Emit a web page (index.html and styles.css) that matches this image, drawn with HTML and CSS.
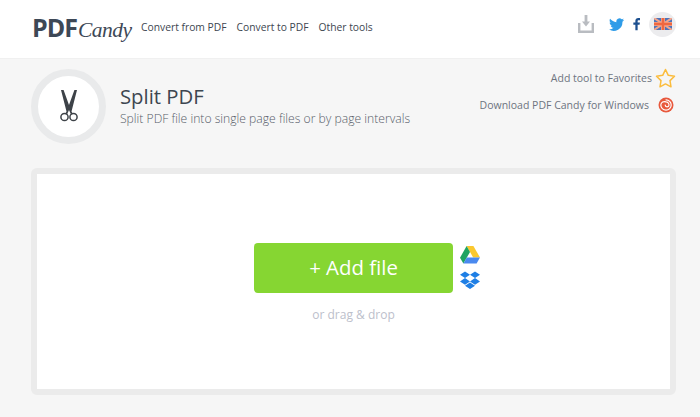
FILE: index.html
```html
<!DOCTYPE html>
<html lang="en">

<head>
    <meta charset="UTF-8">
    <title>Split PDF</title>
    <link rel="stylesheet" href="styles.css">
</head>

<body>
    <header class="header">
        <a class="logo"><b class="logo__pdf">PDF</b><i class="logo__candy">Candy</i></a>
        <nav class="nav">
            <a>Convert from PDF</a>
            <a>Convert to PDF</a>
            <a>Other tools</a>
        </nav>
        <div class="header__icons">
            <svg class="icon-download" width="16" height="18" viewBox="0 0 16 18">
                <path d="M1.200 8v8.800h13.600V8" fill="none" stroke="#b9bcc1" stroke-width="2.400" />
                <path d="M6.600 0h2.800v6.500H12l-4 5-4-5h2.600z" fill="#b9bcc1" />
            </svg>
            <svg class="icon-twitter" width="15" height="13" viewBox="0 0 24 20">
                <path fill="#2f9ce8" d="M24 2.400c-.9.400-1.800.7-2.800.8 1-.6 1.800-1.600 2.200-2.700-1 .6-2 1-3.100 1.200A4.900 4.900 0 0 0 11.900 6.200C7.800 6 4.200 4 1.700.9.400 3.200 1 6.100 3.200 7.500c-.8 0-1.600-.2-2.200-.6 0 2.400 1.700 4.400 3.900 4.900-.7.200-1.500.2-2.200.1.600 2 2.400 3.400 4.600 3.400A9.900 9.900 0 0 1 0 17.900 14 14 0 0 0 21.500 5.500c1-.7 1.800-1.600 2.500-3.100z" />
            </svg>
            <svg class="icon-facebook" width="7" height="14" viewBox="0 0 8 14">
                <path fill="#1c4f8f" d="M5.300 14V7.800h2.200l.4-2.500H5.300V3.800c0-.8.200-1.200 1.300-1.200H8V.2C7.700.1 6.900 0 6 0 4 0 2.700 1.200 2.700 3.400v1.900H.4v2.500h2.300V14z" />
            </svg>
            <span class="lang">
                <svg width="18" height="12" viewBox="0 0 18 12">
                    <rect width="18" height="12" fill="#4f73b8" />
                    <path d="M0 0l18 12M18 0L0 12" stroke="#f3a58c" stroke-width="2" />
                    <path d="M9 0v12M0 6h18" stroke="#f3a58c" stroke-width="4" />
                    <path d="M9 0v12M0 6h18" stroke="#f0673f" stroke-width="2.400" />
                </svg>
            </span>
        </div>
    </header>

    <main class="main">
        <section class="tool">
            <div class="tool__icon">
                <svg class="icon-scissors" width="18" height="32" viewBox="0 0 18 32">
                    <path d="M1 0h2.600l5.400 15 5.400-15H17l-5.500 21.500 1 1.800-1.600.9L9 20l-1.900 4.200-1.600-.9 1-1.800z" fill="#3d4248" />
                    <circle cx="4.500" cy="27" r="3.600" fill="none" stroke="#3d4248" stroke-width="1.500" />
                    <circle cx="13.500" cy="27" r="3.600" fill="none" stroke="#3d4248" stroke-width="1.500" />
                </svg>
            </div>
            <div class="tool__text">
                <h1>Split PDF</h1>
                <p>Split PDF file into single page files or by page intervals</p>
            </div>
            <div class="tool__links">
                <a class="tool__link">Add tool to Favorites
                    <svg class="icon-star" width="21" height="20" viewBox="0 0 21 20">
                        <path d="M10.500 1.500l2.800 5.800 6.200.9-4.500 4.400 1 6.200-5.500-2.900L5 18.800l1-6.200L1.500 8.200l6.200-.9z" fill="none" stroke="#fbbc3c" stroke-width="1.500" stroke-linejoin="round" />
                    </svg>
                </a>
                <a class="tool__link tool__link--win">Download PDF Candy for Windows
                    <svg class="icon-candy" width="16" height="16" viewBox="0 0 16 16">
                        <circle cx="8" cy="8" r="7.500" fill="#e8583c" />
                        <path d="M8 2.800a5.200 5.200 0 1 1-5.200 5.200A3.700 3.700 0 0 1 8 4.900 3 3 0 0 1 11 8 1.900 1.900 0 0 1 7.200 8" fill="none" stroke="#fff" stroke-width="1.200" stroke-linecap="round" />
                    </svg>
                </a>
            </div>
        </section>

        <section class="drop">
            <div class="drop__row">
                <button class="add-btn">+ Add file</button>
                <div class="drop__services">
                    <svg width="20" height="18" viewBox="0 0 20 18">
                        <path d="M6.600 0h6.800l6.600 11.500h-6.800z" fill="#fbc82f" />
                        <path d="M6.600 0L0 11.800l3.400 5.700L10 6z" fill="#1ea362" />
                        <path d="M3.400 17.500h13.200l3.400-6H6.800z" fill="#4a89ef" />
                    </svg>
                    <svg width="20" height="20" viewBox="0 0 20 19">
                        <path fill="#1f7fe5" d="M5 0L0 3.300l5 3.300 5-3.300zM15 0l-5 3.300 5 3.300 5-3.300zM0 9.900l5 3.300 5-3.300-5-3.300zM15 6.600l-5 3.300 5 3.300 5-3.300zM5 14.300L10 17.600l5-3.300-5-3.300z" />
                    </svg>
                </div>
            </div>
            <p class="drop__hint">or drag &amp; drop</p>
        </section>
    </main>
</body>

</html>
```

FILE: styles.css
```css
* {
    box-sizing: border-box;
}

html,
body {
    height: 100%;
}

body {
    margin: 0;
    background-color: #f6f6f6;
    color: #3d4650;
    font-family: "Open Sans", sans-serif;
    overflow: hidden;
}

a {
    color: inherit;
    text-decoration: none;
}

.header {
    display: flex;
    align-items: center;
    height: 59px;
    padding: 0 24px 5px 32px;
    background-color: #ffffff;
    border-bottom: 1px solid #f0f0f0;
}

.logo {
    display: flex;
    align-items: baseline;
    width: 109px;
    color: #3d4856;
}

.logo__pdf {
    font-size: 25px;
    font-weight: 700;
    letter-spacing: -1px;
}

.logo__candy {
    margin-left: 1px;
    font-family: "Liberation Serif", serif;
    font-size: 21.500px;
    letter-spacing: -0.5px;
}

.nav {
    display: flex;
    gap: 10px;
    font-size: 10.300px;
    color: #3d4650;
}

.header__icons {
    display: flex;
    align-items: center;
    margin-left: auto;
    margin-bottom: 5px;
}

.icon-download {
    margin-right: 15px;
}

.icon-twitter {
    margin-right: 9px;
}

.icon-facebook {
    margin-right: 9px;
}

.lang {
    display: flex;
    align-items: center;
    justify-content: center;
    width: 27px;
    height: 25px;
    background-color: #ececee;
    border-radius: 50%;
}

.main {
    padding: 10px 24px 0 31px;
}

.tool {
    display: flex;
    align-items: center;
    height: 74px;
}

.tool__icon {
    display: flex;
    flex-shrink: 0;
    align-items: center;
    justify-content: center;
    width: 75px;
    height: 75px;
    background-color: #ffffff;
    border: 7px solid #e9eaeb;
    border-radius: 50%;
}

.tool__text {
    margin-left: 14px;
    margin-top: -1px;
}

.tool__text h1 {
    margin: 0 0 1px;
    font-size: 20.300px;
    font-weight: 400;
    line-height: 25px;
    color: #3d4650;
}

.tool__text p {
    margin: 0;
    font-size: 12.150px;
    font-weight: 300;
    line-height: 18px;
    color: #565d69;
}

.tool__links {
    display: flex;
    flex-direction: column;
    align-items: flex-end;
    gap: 9px;
    margin-left: auto;
    margin-top: -31px;
    font-size: 10.500px;
    color: #6d7480;
}

.tool__link {
    display: flex;
    align-items: center;
    gap: 3px;
}

.tool__link--win {
    gap: 9px;
    padding-right: 2px;
}

.drop {
    display: flex;
    flex-direction: column;
    align-items: center;
    height: 227px;
    margin-top: 25px;
    padding-top: 69px;
    background-color: #ffffff;
    border: 6px solid #ebebeb;
    border-radius: 6px;
}

.drop__row {
    display: flex;
    align-items: center;
    gap: 7px;
    margin-left: 27px;
}

.add-btn {
    width: 199px;
    height: 50px;
    padding: 0 0 2px;
    background-color: #86d632;
    color: #ffffff;
    border: none;
    border-radius: 4px;
    font-family: "Open Sans", sans-serif;
    font-size: 20.400px;
    cursor: pointer;
}

.drop__services {
    display: flex;
    flex-direction: column;
    gap: 7px;
}

.drop__services svg {
    display: block;
}

.drop__hint {
    margin: 13px 0 0;
    font-size: 12px;
    color: #bcc0cb;
}
```
